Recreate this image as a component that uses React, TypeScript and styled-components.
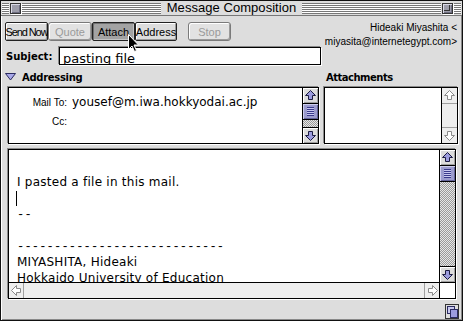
import styled, { createGlobalStyle } from "styled-components";

const GlobalStyle = createGlobalStyle`
  html, body {
    margin: 0;
    padding: 0;
    background: #dddddd;
  }
`;

const Window = styled.div`
  position: relative;
  box-sizing: border-box;
  width: 463px;
  height: 321px;
  border: 1px solid #111;
  background: #dddddd;
  box-shadow: inset 1px 0 #ffffff, inset -1px -1px #888888;
  display: flex;
  flex-direction: column;
  overflow: hidden;
`;

const TitleBar = styled.div`
  display: flex;
  align-items: center;
  height: 14px;
  padding: 0 1px;
  border-bottom: 1px solid #777777;
  background: #dddddd;
`;

const Stripes = styled.div<{ $w?: number }>`
  height: 11px;
  ${(p) => (p.$w ? `width: ${p.$w}px;` : "flex: 1;")}
  background: repeating-linear-gradient(
    to bottom,
    #777777 0 1px,
    #ffffff 1px 2px
  );
`;

const CloseBox = styled.div`
  box-sizing: border-box;
  width: 11px;
  height: 11px;
  margin: 0 1px;
  border: 1px solid #333333;
  background: #9d9daa;
  box-shadow: inset 1px 1px #dadae6, inset -1px -1px #6e6e80, 1px 1px #ffffff;
`;

const ZoomBox = styled(CloseBox)`
  position: relative;
  &::after {
    content: "";
    position: absolute;
    left: 1px;
    top: 1px;
    width: 5px;
    height: 5px;
    border-right: 1px solid #333333;
    border-bottom: 1px solid #333333;
  }
`;

const Title = styled.div`
  padding: 0 6px;
  font-family: "Liberation Sans", Arial, sans-serif;
  font-size: 13px;
  line-height: 14px;
  color: #000000;
  letter-spacing: 0.05px;
`;

const Content = styled.div`
  flex: 1;
  display: flex;
  flex-direction: column;
  padding: 6px 2px 0 4px;
`;

const Toolbar = styled.div`
  display: flex;
  align-items: flex-start;
  height: 19px;
  padding-right: 3px;
`;

const ButtonGroup = styled.div`
  display: flex;
  margin-right: 11px;
`;

const ToolButton = styled.div<{ $w: number; $pressed?: boolean; $off?: boolean; $tight?: boolean }>`
  box-sizing: border-box;
  width: ${(p) => p.$w}px;
  height: 19px;
  display: flex;
  align-items: center;
  justify-content: center;
  border: 1px solid ${(p) => (p.$off ? "#7a7a7a" : "#222222")};
  border-radius: ${(p) => (p.$off ? 3 : 2)}px;
  background: ${(p) => (p.$pressed ? "#a3a3a3" : p.$off ? "#e2e2e2" : "#dddddd")};
  box-shadow: ${(p) =>
    p.$pressed
      ? "inset 1px 1px #6f6f6f, inset -1px -1px #c4c4c4"
      : "inset 1px 1px #ffffff, inset -1px -1px #9a9a9a"};
  font-family: "Liberation Sans", Arial, sans-serif;
  font-size: 11px;
  letter-spacing: ${(p) => (p.$tight ? "-1.1px" : "0")};
  color: ${(p) => (p.$off ? "#9a9a9a" : "#000000")};
  white-space: nowrap;
`;

const Sender = styled.div`
  margin-left: auto;
  margin-top: -1px;
  text-align: right;
  font-family: "Liberation Sans", Arial, sans-serif;
  font-size: 10px;
  line-height: 14px;
  color: #000000;
`;

const SubjectRow = styled.div`
  display: flex;
  align-items: center;
  margin-top: 6px;
  height: 18px;
`;

const BoldLabel = styled.div<{ $ls?: number }>`
  font-family: "DejaVu Sans", sans-serif;
  font-weight: bold;
  font-size: 10px;
  letter-spacing: ${(p) => p.$ls ?? 0}px;
  color: #000000;
  white-space: nowrap;
`;

const SubjectField = styled.div`
  box-sizing: border-box;
  width: 262px;
  height: 18px;
  margin-left: auto;
  margin-right: 139px;
  padding: 3px 0 0 3px;
  border: 1px solid #000000;
  background: #ffffff;
  box-shadow: -1px -1px #888888, 1px 1px #ffffff;
  font-family: "DejaVu Sans", sans-serif;
  font-size: 13px;
  line-height: 16px;
  color: #000000;
  overflow: hidden;
  white-space: nowrap;
`;

const SubjectLabelWrap = styled.div`
  padding-left: 1px;
`;

const HeaderRow = styled.div`
  display: flex;
  align-items: center;
  margin-top: 5px;
  height: 14px;
`;

const HeaderLeft = styled.div`
  display: flex;
  align-items: center;
  gap: 6px;
  width: 321px;
`;

const Panels = styled.div`
  display: flex;
  gap: 5px;
  margin-top: 3px;
  padding-left: 3px;
`;

const ListBox = styled.div<{ $w: number; $h: number }>`
  box-sizing: border-box;
  display: flex;
  width: ${(p) => p.$w}px;
  height: ${(p) => p.$h}px;
  border: 1px solid #000000;
  background: #ffffff;
  box-shadow: -1px -1px #8a8a8a, 1px 1px #ffffff;
`;

const AddressList = styled.div`
  flex: 1;
  display: flex;
  flex-direction: column;
  gap: 1px;
  padding-top: 5px;
`;

const AddressRow = styled.div`
  display: flex;
  align-items: center;
  height: 18px;
`;

const FieldLabel = styled.div`
  width: 58px;
  text-align: right;
  font-family: "Liberation Sans", Arial, sans-serif;
  font-size: 10px;
  color: #000000;
`;

const FieldValue = styled.div`
  margin-left: 5px;
  font-family: "DejaVu Sans", sans-serif;
  font-size: 12px;
  color: #000000;
  white-space: nowrap;
`;

const Spacer = styled.div`
  flex: 1;
`;

const VScroll = styled.div`
  box-sizing: border-box;
  width: 16px;
  display: flex;
  flex-direction: column;
  border-left: 1px solid #000000;
`;

const HScroll = styled.div`
  box-sizing: border-box;
  height: 16px;
  display: flex;
  border-top: 1px solid #000000;
  background: #eeeeee;
`;

const ArrowCell = styled.div<{ $active?: boolean; $edge: "top" | "bottom" | "left" | "right" }>`
  box-sizing: border-box;
  width: 15px;
  height: ${(p) => (p.$edge === "left" || p.$edge === "right" ? "15px" : "16px")};
  flex-shrink: 0;
  display: flex;
  align-items: center;
  justify-content: center;
  background: ${(p) => (p.$active ? "#dcdcdc" : "#eeeeee")};
  box-shadow: ${(p) => (p.$active ? "inset 1px 1px #ffffff, inset -1px -1px #a0a0a0" : "none")};
  ${(p) =>
    p.$edge === "top"
      ? "border-bottom: 1px solid #000;"
      : p.$edge === "bottom"
      ? "border-top: 1px solid #000;"
      : p.$edge === "left"
      ? "border-right: 1px solid #000;"
      : "border-left: 1px solid #000;"}
  ${(p) => (!p.$active ? "border-color: #a0a0a0;" : "")}
`;

const Thumb = styled.div`
  box-sizing: border-box;
  height: 16px;
  display: flex;
  align-items: center;
  justify-content: center;
  border-bottom: 1px solid #000000;
  background: #9c9cce;
  box-shadow: inset 1px 1px #ceceee, inset -1px -1px #636399;
`;

const Grip = styled.div`
  width: 7px;
  height: 9px;
  background: repeating-linear-gradient(
    to bottom,
    #3a3a8c 0 1px,
    #c8c8f0 1px 2px
  );
`;

const Track = styled.div<{ $active?: boolean }>`
  flex: 1;
  background: ${(p) =>
    p.$active
      ? "repeating-conic-gradient(#9a9a9a 0 25%, #e6e6e6 0 50%) 0 0 / 2px 2px"
      : "#eeeeee"};
`;

const BodyBox = styled.div`
  box-sizing: border-box;
  display: flex;
  flex-direction: column;
  width: 448px;
  height: 150px;
  margin-top: 5px;
  margin-left: 3px;
  border: 1px solid #000000;
  background: #ffffff;
  box-shadow: -1px -1px #8a8a8a, 1px 1px #ffffff;
`;

const BodyMain = styled.div`
  flex: 1;
  display: flex;
  min-height: 0;
`;

const TextArea = styled.div`
  flex: 1;
  padding: 8px 0 0 8px;
  overflow: hidden;
  font-family: "DejaVu Sans", sans-serif;
  font-size: 12px;
  letter-spacing: 0.25px;
  line-height: 16px;
  color: #000000;
  white-space: pre;
`;

const Line = styled.div`
  height: 16px;
`;

const Dashes = styled.span`
  font-family: "Liberation Mono", monospace;
  font-size: 12px;
  letter-spacing: 0.2px;
`;

const Caret = styled.span`
  display: inline-block;
  width: 1px;
  height: 15px;
  margin-left: -1px;
  vertical-align: -4px;
  background: #000000;
`;

const Corner = styled.div`
  box-sizing: border-box;
  width: 16px;
  border-left: 1px solid #000000;
  background: #ffffff;
`;

const Footer = styled.div`
  display: flex;
  justify-content: flex-end;
  margin-top: 5px;
  padding-right: 1px;
`;

const Pointer = styled.svg`
  position: absolute;
  left: 127px;
  top: 33px;
`;

type Dir = "up" | "down" | "left" | "right";

const rot: Record<Dir, number> = { up: 0, down: 180, left: -90, right: 90 };

const Arrow = ({ dir, active }: { dir: Dir; active?: boolean }) => (
  <svg width="13" height="13" viewBox="0 0 13 13">
    <path
      d="M6.5 1.5 L11.5 6.5 L8.5 6.5 L8.5 10.5 L4.5 10.5 L4.5 6.5 L1.5 6.5 Z"
      transform={`rotate(${rot[dir]} 6.5 6.5)`}
      fill={active ? "#9c9cde" : "#ffffff"}
      stroke={active ? "#1a1a40" : "#8a8a8a"}
      strokeWidth="1"
      strokeLinejoin="miter"
    />
  </svg>
);

const Disclosure = () => (
  <svg width="11" height="8" viewBox="0 0 11 8">
    <path d="M0.5 0.5 L10.5 0.5 L5.5 7 Z" fill="#a8a8e8" stroke="#2a2a60" strokeWidth="1" />
  </svg>
);

const GrowBox = () => (
  <svg width="14" height="15" viewBox="0 0 14 15">
    <rect x="0.5" y="0.5" width="13" height="14" fill="#dddddd" stroke="#333333" />
    <rect x="2.5" y="2.5" width="7" height="7" fill="#c8c8ee" stroke="#2a2a60" />
    <rect x="5.5" y="5.5" width="7" height="8" fill="#9c9cde" stroke="#2a2a60" />
  </svg>
);

const ActiveVScroll = () => (
  <VScroll>
    <ArrowCell $active $edge="top">
      <Arrow dir="up" active />
    </ArrowCell>
    <Thumb>
      <Grip />
    </Thumb>
    <Track $active />
    <ArrowCell $active $edge="bottom">
      <Arrow dir="down" active />
    </ArrowCell>
  </VScroll>
);

const buttons = [
  { label: "Send Now", w: 43, tight: true },
  { label: "Quote", w: 44, off: true },
  { label: "Attach", w: 43, pressed: true },
  { label: "Address", w: 42 },
];

const bodyLines = [
  "",
  "I pasted a file in this mail.",
  null,
  "--",
  "",
  "----------------------------",
  "MIYASHITA, Hideaki",
  "Hokkaido University of Education",
];

export default function App() {
  return (
    <>
      <GlobalStyle />
      <Window>
        <TitleBar>
          <Stripes $w={7} />
          <CloseBox />
          <Stripes />
          <Title>Message Composition</Title>
          <Stripes />
          <ZoomBox />
          <Stripes $w={7} />
        </TitleBar>

        <Content>
          <Toolbar>
            <ButtonGroup>
              {buttons.map((b) => (
                <ToolButton key={b.label} $w={b.w} $off={b.off} $pressed={b.pressed} $tight={b.tight}>
                  {b.label}
                </ToolButton>
              ))}
            </ButtonGroup>
            <ToolButton $w={43} $off>
              Stop
            </ToolButton>
            <Sender>
              Hideaki Miyashita &lt;
              <br />
              miyasita@internetegypt.com&gt;
            </Sender>
          </Toolbar>

          <SubjectRow>
            <SubjectLabelWrap>
              <BoldLabel>Subject:</BoldLabel>
            </SubjectLabelWrap>
            <SubjectField>pasting file</SubjectField>
          </SubjectRow>

          <HeaderRow>
            <HeaderLeft>
              <Disclosure />
              <BoldLabel $ls={-0.3}>Addressing</BoldLabel>
            </HeaderLeft>
            <BoldLabel $ls={-0.5}>Attachments</BoldLabel>
          </HeaderRow>

          <Panels>
            <ListBox $w={311} $h={57}>
              <AddressList>
                <AddressRow>
                  <FieldLabel>Mail To:</FieldLabel>
                  <FieldValue>yousef@m.iwa.hokkyodai.ac.jp</FieldValue>
                </AddressRow>
                <AddressRow>
                  <FieldLabel>Cc:</FieldLabel>
                </AddressRow>
              </AddressList>
              <ActiveVScroll />
            </ListBox>
            <ListBox $w={134} $h={57}>
              <Spacer />
              <VScroll>
                <ArrowCell $edge="top">
                  <Arrow dir="up" />
                </ArrowCell>
                <Track />
                <ArrowCell $edge="bottom">
                  <Arrow dir="down" />
                </ArrowCell>
              </VScroll>
            </ListBox>
          </Panels>

          <BodyBox>
            <BodyMain>
              <TextArea>
                {bodyLines.map((line, i) =>
                  line === null ? (
                    <Line key={i}>
                      <Caret />
                    </Line>
                  ) : line.startsWith("-") ? (
                    <Line key={i}>
                      <Dashes>{line}</Dashes>
                    </Line>
                  ) : (
                    <Line key={i}>{line}</Line>
                  )
                )}
              </TextArea>
              <ActiveVScroll />
            </BodyMain>
            <HScroll>
              <ArrowCell $edge="left">
                <Arrow dir="left" />
              </ArrowCell>
              <Track />
              <ArrowCell $edge="right">
                <Arrow dir="right" />
              </ArrowCell>
              <Corner />
            </HScroll>
          </BodyBox>

          <Footer>
            <GrowBox />
          </Footer>
        </Content>

        <Pointer width="12" height="19" viewBox="0 0 12 19">
          <path
            d="M0.5 0.5 L0.5 15.5 L4 12 L6.5 17.5 L8.5 16.5 L6 11 L10.5 11 Z"
            fill="#000000"
            stroke="#ffffff"
            strokeWidth="1"
          />
        </Pointer>
      </Window>
    </>
  );
}
